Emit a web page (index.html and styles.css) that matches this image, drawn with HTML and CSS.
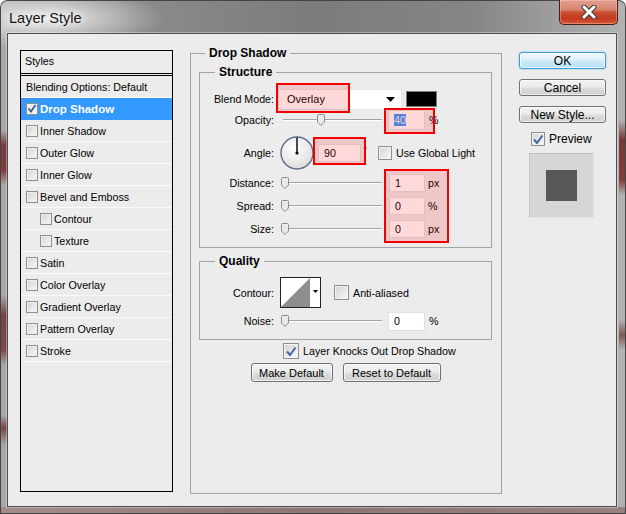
FILE: index.html
```html
<!DOCTYPE html>
<html lang="en">
<head>
	<meta charset="UTF-8">
	<title>Layer Style</title>
	<link rel="stylesheet" href="styles.css">
</head>
<body>
	<div class="window">
		<div class="titlebar">
			<span class="title">Layer Style</span>
			<span class="close">
				<svg width="16" height="14" viewBox="0 0 16 14">
					<path d="M3 2 L13 12 M13 2 L3 12" stroke="#3a3a3a" stroke-width="5" stroke-linecap="round"/>
					<path d="M3 2 L13 12 M13 2 L3 12" stroke="#fff" stroke-width="3" stroke-linecap="round"/>
				</svg>
			</span>
		</div>

		<div class="content">
			<!-- styles list -->
			<div class="styles-list">
				<div class="list-head">Styles</div>
				<div class="list-item">Blending Options: Default</div>
				<div class="list-item selected">
					<span class="check small"><svg width="10" height="9" viewBox="0 0 10 9"><path d="M1.5 4.5 L4 7.5 L8.5 1" stroke="#3d5a98" stroke-width="1.8" fill="none"/></svg></span>Drop Shadow
				</div>
				<div class="list-item"><span class="check small"></span>Inner Shadow</div>
				<div class="list-item"><span class="check small"></span>Outer Glow</div>
				<div class="list-item"><span class="check small"></span>Inner Glow</div>
				<div class="list-item"><span class="check small"></span>Bevel and Emboss</div>
				<div class="list-item sub"><span class="check small"></span>Contour</div>
				<div class="list-item sub"><span class="check small"></span>Texture</div>
				<div class="list-item"><span class="check small"></span>Satin</div>
				<div class="list-item"><span class="check small"></span>Color Overlay</div>
				<div class="list-item"><span class="check small"></span>Gradient Overlay</div>
				<div class="list-item"><span class="check small"></span>Pattern Overlay</div>
				<div class="list-item"><span class="check small"></span>Stroke</div>
			</div>

			<!-- drop shadow options -->
			<fieldset class="group main-group">
				<legend>Drop Shadow</legend>

				<fieldset class="group sub-group">
					<legend>Structure</legend>
					<div class="rows structure">
						<div class="row blend-row">
							<span class="label">Blend Mode:</span>
							<span class="select">
								<span>Overlay</span>
								<svg width="9" height="5" viewBox="0 0 9 5"><path d="M0 0 H9 L4.5 5 Z" fill="#000"/></svg>
							</span>
							<span class="swatch"></span>
						</div>
						<div class="row opacity-row">
							<span class="label">Opacity:</span>
							<span class="slider"><svg class="thumb" style="margin-left:36px" viewBox="0 0 8 12"><path d="M0.5 1.5 Q0.5 0.5 1.5 0.5 H6.5 Q7.5 0.5 7.5 1.5 V8 L4 11.5 L0.5 8 Z" fill="#e9e9e9" stroke="#8c8c8c"/></svg></span>
							<span class="field"><span class="sel">40</span></span>
							<span class="unit">%</span>
						</div>
						<div class="row angle-row">
							<span class="label">Angle:</span>
							<svg class="dial" width="34" height="34" viewBox="0 0 34 34">
								<defs>
									<radialGradient id="dialFill" cx="40%" cy="35%" r="70%">
										<stop offset="0" stop-color="#ffffff"/>
										<stop offset="1" stop-color="#dcdcdc"/>
									</radialGradient>
								</defs>
								<circle cx="17" cy="17" r="16" fill="url(#dialFill)" stroke="#5c6b8a" stroke-width="1.4"/>
								<path d="M17 17 V1.5" stroke="#000" stroke-width="1.4"/>
								<circle cx="17" cy="17" r="1.6" fill="#000"/>
							</svg>
							<span class="field angle-field">90</span>
							<span class="degree">°</span>
							<span class="check global"></span>
							<span class="check-text">Use Global Light</span>
						</div>
						<div class="row slide-row first">
							<span class="label">Distance:</span>
							<span class="slider"><svg class="thumb" viewBox="0 0 8 12"><path d="M0.5 1.5 Q0.5 0.5 1.5 0.5 H6.5 Q7.5 0.5 7.5 1.5 V8 L4 11.5 L0.5 8 Z" fill="#e9e9e9" stroke="#8c8c8c"/></svg></span>
							<span class="field small-field">1</span>
							<span class="unit">px</span>
						</div>
						<div class="row slide-row">
							<span class="label">Spread:</span>
							<span class="slider"><svg class="thumb" viewBox="0 0 8 12"><path d="M0.5 1.5 Q0.5 0.5 1.5 0.5 H6.5 Q7.5 0.5 7.5 1.5 V8 L4 11.5 L0.5 8 Z" fill="#e9e9e9" stroke="#8c8c8c"/></svg></span>
							<span class="field small-field">0</span>
							<span class="unit">%</span>
						</div>
						<div class="row slide-row">
							<span class="label">Size:</span>
							<span class="slider"><svg class="thumb" viewBox="0 0 8 12"><path d="M0.5 1.5 Q0.5 0.5 1.5 0.5 H6.5 Q7.5 0.5 7.5 1.5 V8 L4 11.5 L0.5 8 Z" fill="#e9e9e9" stroke="#8c8c8c"/></svg></span>
							<span class="field small-field">0</span>
							<span class="unit">px</span>
						</div>

						<!-- red highlight marks -->
						<span class="mark mark-blend"></span>
						<span class="mark mark-opacity"></span>
						<span class="mark mark-angle"></span>
						<span class="mark mark-sliders"></span>
					</div>
				</fieldset>

				<fieldset class="group sub-group quality">
					<legend>Quality</legend>
					<div class="rows">
						<div class="row contour-row">
							<span class="label">Contour:</span>
							<svg class="contour" width="41" height="31" viewBox="0 0 41 31">
								<rect x="0.5" y="0.5" width="40" height="30" fill="#fff" stroke="#222"/>
								<path d="M1 30 L30 1 V30 Z" fill="#8e8e8e"/>
								<path d="M33 13 H38 L35.5 16 Z" fill="#000"/>
							</svg>
							<span class="check aa"></span>
							<span class="check-text">Anti-aliased</span>
						</div>
						<div class="row noise-row">
							<span class="label">Noise:</span>
							<span class="slider"><svg class="thumb" viewBox="0 0 8 12"><path d="M0.5 1.5 Q0.5 0.5 1.5 0.5 H6.5 Q7.5 0.5 7.5 1.5 V8 L4 11.5 L0.5 8 Z" fill="#e9e9e9" stroke="#8c8c8c"/></svg></span>
							<span class="field">0</span>
							<span class="unit">%</span>
						</div>
					</div>
				</fieldset>

				<div class="knock">
					<span class="check"><svg width="12" height="11" viewBox="0 0 12 11"><path d="M2 5.5 L5 9 L10.5 1.5" stroke="#4263a8" stroke-width="2" fill="none"/></svg></span>
					<span class="check-text">Layer Knocks Out Drop Shadow</span>
				</div>
				<div class="defaults">
					<button class="btn make">Make Default</button>
					<button class="btn reset">Reset to Default</button>
				</div>
			</fieldset>

			<!-- dialog buttons -->
			<div class="side">
				<button class="btn side-btn default">OK</button>
				<button class="btn side-btn">Cancel</button>
				<button class="btn side-btn">New Style...</button>
				<div class="preview-toggle">
					<span class="check"><svg width="12" height="11" viewBox="0 0 12 11"><path d="M2 5.5 L5 9 L10.5 1.5" stroke="#4263a8" stroke-width="2" fill="none"/></svg></span>
					<span>Preview</span>
				</div>
				<div class="preview-box"><span class="preview-square"></span></div>
			</div>
		</div>
	</div>
</body>
</html>
```

FILE: styles.css
```css
* {
	box-sizing: border-box;
}
body {
	margin: 0;
	font-family: "Liberation Sans", Arial, sans-serif;
	font-size: 10.7px;
	color: #000;
	background: #fff;
}

/* window frame */
.window {
	width: 626px;
	height: 514px;
	display: flex;
	flex-direction: column;
	border-radius: 7px 7px 0 0;
	overflow: hidden;
	box-shadow: inset 0 0 0 1px #454545;
	background:
		radial-gradient(ellipse 120px 30px at 45px 18px, rgba(255,255,255,.8), rgba(255,255,255,0)),
		linear-gradient(to bottom, transparent 130px, rgba(105,25,25,.75) 145px, rgba(120,30,30,.8) 170px, transparent 185px, transparent 295px, rgba(95,25,25,.7) 315px, rgba(110,30,30,.7) 350px, transparent 365px, transparent 415px, rgba(100,25,25,.7) 428px, transparent 445px) 0 0 / 7px 100% no-repeat,
		linear-gradient(to bottom, transparent 120px, rgba(110,25,25,.8) 140px, rgba(120,30,30,.8) 180px, transparent 195px, transparent 320px, rgba(100,25,25,.6) 335px, transparent 350px) 619px 0 / 7px 100% no-repeat,
		linear-gradient(to right, #a58c8c, #8f7676 50%, #9a8080) 0 507px / 100% 7px no-repeat,
		linear-gradient(to right, #a9a9a9 0%, #8b8b8b 22%, #7b7b7b 50%, #858585 75%, #b3b3b3 100%);
}
.titlebar {
	height: 33px;
	display: flex;
	justify-content: space-between;
	align-items: flex-start;
}
.title {
	margin: 10px 0 0 9px;
	font-size: 14.5px;
	line-height: 17px;
	color: #151515;
	text-shadow: 0 0 6px #fff, 0 0 10px rgba(255,255,255,.8);
}
.close {
	width: 59px;
	height: 25px;
	margin-right: 8px;
	display: flex;
	align-items: center;
	justify-content: center;
	border: 1px solid #4a1c14;
	border-top: none;
	border-radius: 0 0 5px 5px;
	background: linear-gradient(#e3a08f 0%, #d6836f 40%, #c94e33 52%, #c23a20 78%, #d8593a 100%);
	box-shadow: inset 0 0 0 1px rgba(255,220,210,.35);
}

/* content panel */
.content {
	flex: 1;
	margin: 0 9px 7px 7px;
	padding: 12px 0 0 12px;
	display: flex;
	align-items: flex-start;
	background: #ececec;
	border: 1px solid #4d4d4d;
	box-shadow: 0 0 0 1px rgba(255,255,255,.35);
}

/* styles list */
.styles-list {
	width: 153px;
	height: 442px;
	margin-top: 4px;
	border: 1px solid #000;
}
.list-head {
	height: 25px;
	line-height: 21px;
	padding-left: 4px;
	border-bottom: 3px double #000;
}
.list-item {
	height: 22px;
	padding-left: 5px;
	display: flex;
	align-items: center;
	gap: 2px;
	border-bottom: 1px solid #fbfbfb;
	white-space: nowrap;
}
.list-item:first-of-type {
	padding-left: 4px;
}
.list-item.sub {
	padding-left: 19px;
}
.list-item.selected {
	background: #3399ff;
	color: #fff;
	font-weight: bold;
	font-size: 11.5px;
	border-bottom-color: #3399ff;
}

/* checkboxes */
.check {
	width: 14px;
	height: 14px;
	flex: none;
	display: inline-flex;
	align-items: center;
	justify-content: center;
	border: 1px solid #8e8f8f;
	background: linear-gradient(135deg, #d3d3d3, #f9f9f9);
	box-shadow: inset 0 0 0 1px #f2f2f2;
}
.check.small {
	width: 12px;
	height: 12px;
	box-shadow: inset 0 0 0 1px #efefef;
}
.selected .check.small {
	background: linear-gradient(135deg, #e3e3e3, #fdfdfd);
}
.check-text {
	margin-left: 4px;
	white-space: nowrap;
}

/* group boxes */
.group {
	margin: 0;
	padding: 0;
	min-width: 0;
	border: 1px solid #a3a3a3;
}
.group > legend {
	padding: 0 4px;
	font-weight: bold;
	font-size: 12px;
	line-height: 14px;
}
.main-group {
	width: 312px;
	height: 448px;
	margin-left: 17px;
	padding: 0 9px 0 8px;
}
.main-group > legend {
	margin-left: 6px;
}
.sub-group {
	width: 293px;
	margin-top: 5px;
}
.sub-group > legend {
	margin-left: 15px;
}
.sub-group.quality {
	margin-top: 6px;
}
.rows {
	position: relative;
	padding: 9px 0 7px;
}
.quality .rows {
	padding-bottom: 8px;
}
.row {
	display: flex;
	align-items: center;
}
.label {
	width: 74px;
	flex: none;
	text-align: right;
	white-space: nowrap;
}
.unit {
	margin-left: 4px;
}

.blend-row {
	height: 22px;
}
.select {
	width: 124px;
	height: 21px;
	margin-left: 4px;
	padding: 0 6px 0 8px;
	display: flex;
	align-items: center;
	justify-content: space-between;
	background: #fff;
	border: 1px solid #e4e4e4;
	font-size: 11px;
}
.swatch {
	width: 31px;
	height: 16px;
	margin-left: 4px;
	background: #000;
	border: 1px solid #7a7a7a;
}

.opacity-row {
	height: 20px;
}
.slider {
	width: 101px;
	height: 14px;
	margin-left: 7px;
	display: flex;
	align-items: center;
	background:
		linear-gradient(#a2a2a2, #a2a2a2) 2px 6px / 99px 1px no-repeat,
		linear-gradient(#fff, #fff) 2px 7px / 99px 1px no-repeat;
}
.thumb {
	width: 8px;
	height: 12px;
	display: block;
}
.field {
	width: 37px;
	height: 20px;
	margin-left: 6px;
	padding-left: 5px;
	display: flex;
	align-items: center;
	background: #fff;
	border: 1px solid #e0e0e0;
}
.sel {
	background: #3399ff;
	color: #e8f2ff;
}

.angle-row {
	height: 35px;
	margin-top: 5px;
}
.dial {
	margin-left: 6px;
	flex: none;
}
.angle-field {
	width: 43px;
	height: 18px;
	margin-left: 4px;
}
.degree {
	width: 10px;
	margin-left: 2px;
	color: #3d6ea8;
	align-self: flex-start;
	margin-top: 9px;
}
.check.global {
	margin-left: 5px;
}

.slide-row {
	height: 23px;
}
.slide-row.first {
	margin-top: 1px;
}
.small-field {
	width: 36px;
	height: 18px;
	margin-left: 7px;
}
.slide-row .unit {
	margin-left: 3px;
}

/* red highlight marks */
.mark {
	position: absolute;
	border: 2px solid #f20000;
	background: rgba(255, 0, 0, .15);
}
.mark-blend {
	left: 76px;
	top: 4px;
	width: 74px;
	height: 30px;
}
.mark-opacity {
	left: 184px;
	top: 29px;
	width: 51px;
	height: 26px;
}
.mark-angle {
	left: 113px;
	top: 58px;
	width: 53px;
	height: 28px;
}
.mark-sliders {
	left: 184px;
	top: 90px;
	width: 65px;
	height: 74px;
}

/* quality */
.contour-row {
	height: 31px;
}
.contour {
	margin-left: 6px;
	flex: none;
}
.check.aa {
	margin-left: 13px;
	width: 15px;
	height: 15px;
}
.noise-row {
	height: 20px;
	margin-top: 3px;
}
.noise-row .field {
	height: 19px;
}

.knock {
	height: 16px;
	margin-top: 3px;
	padding-left: 84px;
	display: flex;
	align-items: center;
}
.knock .check {
	width: 16px;
	height: 16px;
}
.defaults {
	margin-top: 4px;
	display: flex;
	justify-content: center;
	gap: 10px;
}

/* buttons */
.btn {
	padding: 0;
	font: inherit;
	font-size: 11px;
	color: #000;
	text-align: center;
	border: 1px solid #707070;
	border-radius: 3px;
	background: linear-gradient(#f2f2f2 0%, #ebebeb 48%, #dddddd 52%, #cfcfcf 100%);
	box-shadow: inset 0 0 0 1px rgba(255,255,255,.7);
}
.make {
	width: 82px;
	height: 19px;
}
.reset {
	width: 98px;
	height: 19px;
}

.side {
	width: 87px;
	margin-left: 17px;
	margin-top: 6px;
	display: flex;
	flex-direction: column;
	font-size: 12px;
}
.side-btn {
	height: 17px;
	line-height: 14px;
	font-size: 12px;
	margin-bottom: 10px;
}
.side-btn.default {
	border-color: #3c9bd6;
	background: linear-gradient(#edf7fd 0%, #dff1fb 48%, #cbe9f9 52%, #b9e0f6 100%);
	box-shadow: inset 0 0 0 1px rgba(255,255,255,.8), 0 0 2px rgba(60,155,214,.6);
}
.preview-toggle {
	height: 14px;
	margin-top: -1px;
	padding-left: 12px;
	display: flex;
	align-items: center;
	gap: 4px;
}
.preview-box {
	width: 65px;
	height: 65px;
	margin: 7px 0 0 10px;
	display: flex;
	align-items: center;
	justify-content: center;
	background: #d6d6d6;
	border: 1px solid;
	border-color: #c2c2c2 #e4e4e4 #e4e4e4 #c2c2c2;
}
.preview-square {
	width: 31px;
	height: 31px;
	background: #575757;
}
```
